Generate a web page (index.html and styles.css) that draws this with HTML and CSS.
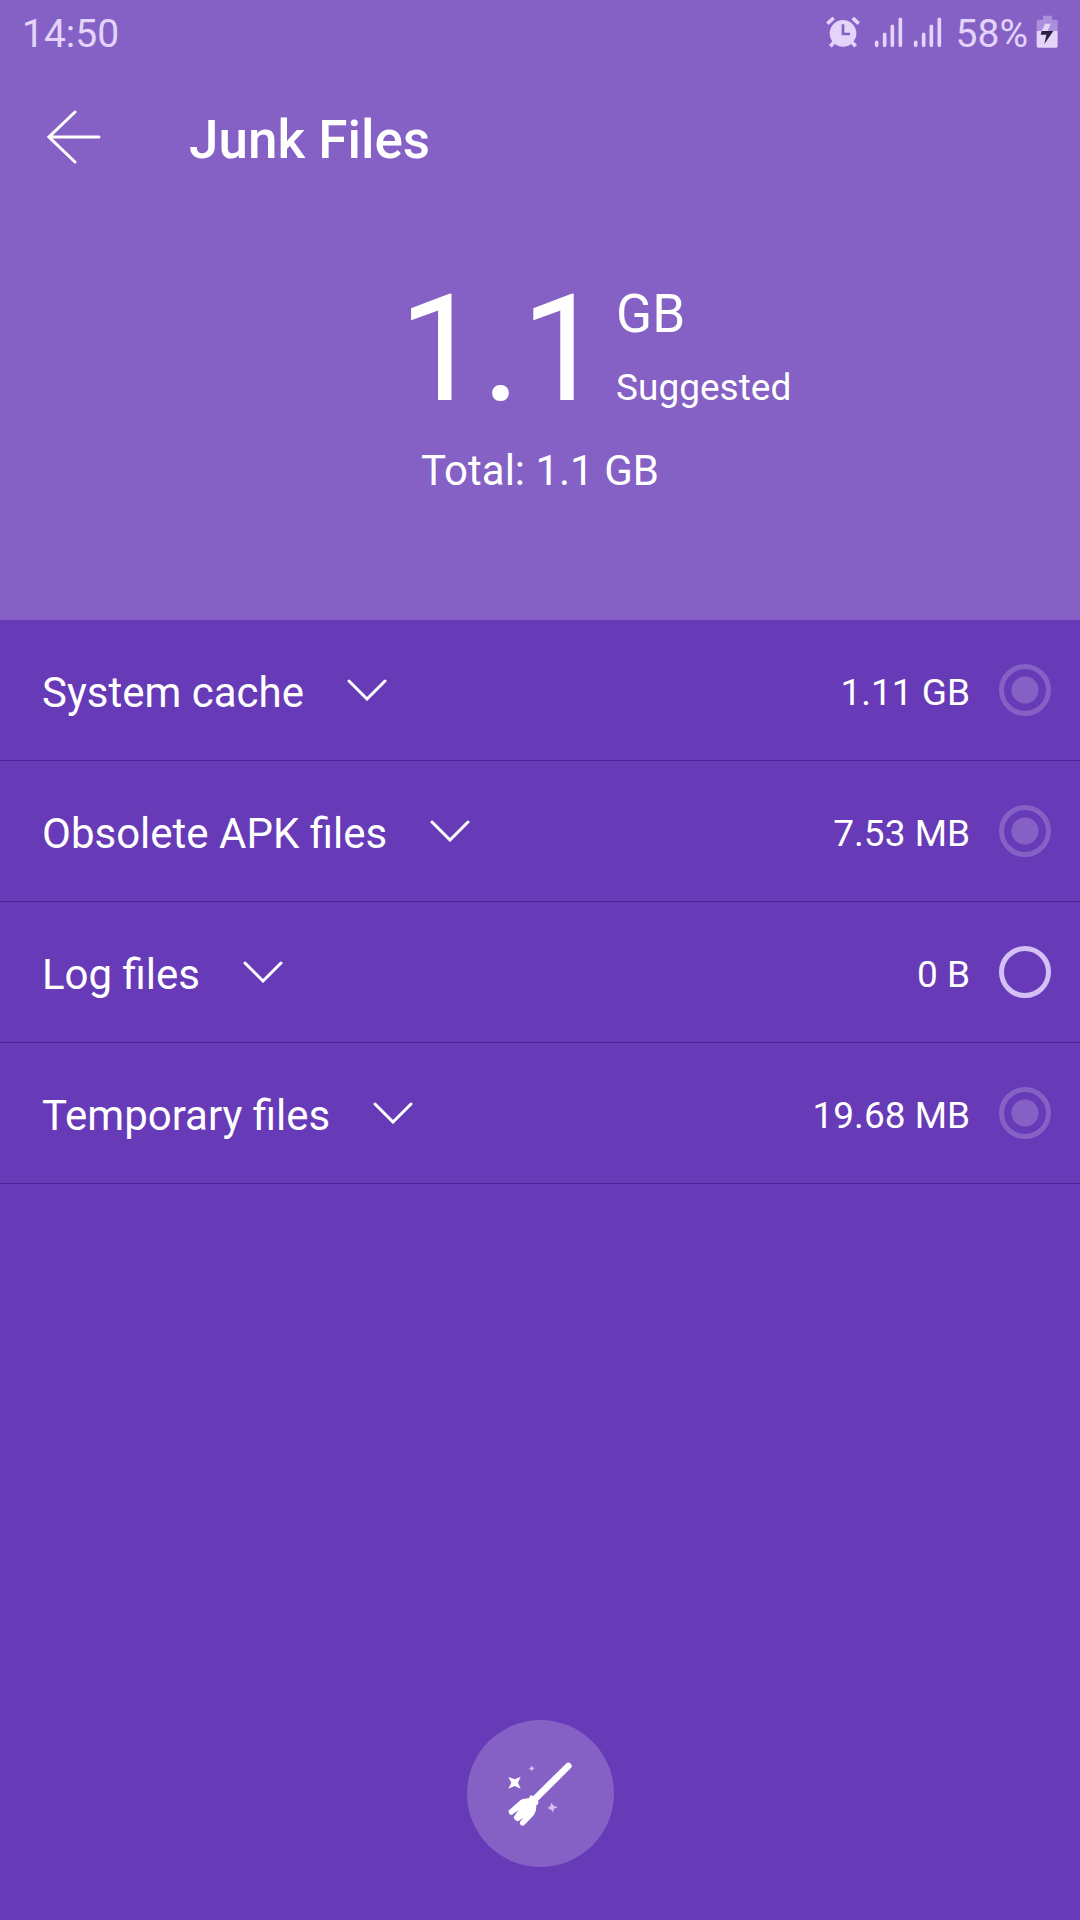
FILE: index.html
```html
<!DOCTYPE html>
<html lang="en">
    <head>
        <meta charset="utf-8">
        <meta name="viewport" content="width=device-width, initial-scale=1">
        <title>Junk Files</title>
        <link rel="stylesheet" href="styles.css">
    </head>
    <body>
        <header class="top">
            <div class="status-bar">
                <span>14:50</span>
                <div class="status-icons">
                    <svg class="alarm" viewBox="81 45 102 96" aria-hidden="true">
                        <g fill="none" stroke="currentColor" stroke-width="11">
                            <path d="M85 68L104 51M161 51L179 68"/>
                            <path d="M105 123L94 136M158 123L170 136"/>
                        </g>
                        <circle cx="132" cy="97" r="40" fill="currentColor"/>
                        <path class="alarm-hands" d="M132 70V99H153"/>
                    </svg>
                    <svg class="signal" viewBox="225 45 87 96" aria-hidden="true">
                        <path d="M233 124V133M257 100V133M280 76V133M304 55V133"/>
                    </svg>
                    <svg class="signal" viewBox="225 45 87 96" aria-hidden="true">
                        <path d="M233 124V133M257 100V133M280 76V133M304 55V133"/>
                    </svg>
                    <span class="percent">58%</span>
                    <svg class="battery" viewBox="709 45 66 99" aria-hidden="true">
                        <path d="M730 47H757V59H769Q774 59 774 64V93H711V64Q711 59 716 59H730Z" fill="currentColor" opacity=".4"/>
                        <path d="M711 93H774V138Q774 143 769 143H716Q711 143 711 138Z" fill="currentColor"/>
                        <path d="M736 71H753L744 93H726Z" fill="currentColor"/>
                        <path d="M726 93H761L734 132L740 104H723Z" fill="#2c2140"/>
                    </svg>
                </div>
            </div>

            <div class="title-bar">
                <button type="button" class="back" aria-label="Back">
                    <svg viewBox="0 0 54 54" aria-hidden="true">
                        <path d="M28 2L2 27L28 52M2 27H52"/>
                    </svg>
                </button>
                <h1>Junk Files</h1>
            </div>

            <div class="summary">
                <span class="amount">1.1</span>
                <div class="amount-info">
                    <span class="unit">GB</span>
                    <span class="suggested">Suggested</span>
                </div>
            </div>
            <p class="total">Total: 1.1 GB</p>
        </header>

        <main>
            <ul class="files">
                <li>
                    <button type="button" class="expand">
                        <span id="system">System cache</span>
                        <svg viewBox="0 0 40 22" aria-hidden="true"><path d="M2 2L20 20L38 2"/></svg>
                    </button>
                    <span class="size">1.11 GB</span>
                    <input type="checkbox" aria-labelledby="system" checked>
                </li>
                <li>
                    <button type="button" class="expand">
                        <span id="apk">Obsolete APK files</span>
                        <svg viewBox="0 0 40 22" aria-hidden="true"><path d="M2 2L20 20L38 2"/></svg>
                    </button>
                    <span class="size">7.53 MB</span>
                    <input type="checkbox" aria-labelledby="apk" checked>
                </li>
                <li>
                    <button type="button" class="expand">
                        <span id="log">Log files</span>
                        <svg viewBox="0 0 40 22" aria-hidden="true"><path d="M2 2L20 20L38 2"/></svg>
                    </button>
                    <span class="size">0 B</span>
                    <input type="checkbox" aria-labelledby="log">
                </li>
                <li>
                    <button type="button" class="expand">
                        <span id="temp">Temporary files</span>
                        <svg viewBox="0 0 40 22" aria-hidden="true"><path d="M2 2L20 20L38 2"/></svg>
                    </button>
                    <span class="size">19.68 MB</span>
                    <input type="checkbox" aria-labelledby="temp" checked>
                </li>
            </ul>
        </main>

        <footer>
            <button type="button" class="clean" aria-label="Clean">
                <svg viewBox="202 181 198 198" aria-hidden="true">
                    <path d="M386 196L288 293" fill="none" stroke="#fff" stroke-width="20" stroke-linecap="round"/>
                    <path fill="#fff" d="M271 285Q276 282 280 287L294 299Q299 305 295 311L290 314Q291 334 280 346L254 373Q248 378 243 373Q238 368 242 362L251 352L236 361Q232 363 228 359L224 355Q220 350 224 346L236 329L217 342Q213 344 209 339Q205 333 208 329L237 303Q248 293 268 293Z"/>
                    <path fill="#fff" d="M206 229L225 236L243 228L235 246L243 264L225 256L206 264L215 246Z"/>
                    <path fill="#d6c0f0" d="M274 195L279 200L285 202L280 206L278 212L274 207L267 205L273 201Z"/>
                    <path fill="#d6c0f0" d="M335 306L342 315L354 320L343 324L340 335L334 327L323 322L332 317Z"/>
                </svg>
            </button>
        </footer>
    </body>
</html>
```
FILE: styles.css
```css
* {
    box-sizing: border-box;
}

body {
    display: flex;
    flex-direction: column;
    min-height: 100vh;
    margin: 0;
    background: #673ab7;
    color: white;
    font-family: Roboto, "Liberation Sans", sans-serif;
}

button {
    padding: 0;
    border: 0;
    background: none;
    color: inherit;
    font: inherit;
    cursor: pointer;
}

svg {
    display: block;
}

.top {
    padding-bottom: 124px;
    background: #8561c5;
}

/* Status bar */

.status-bar {
    display: flex;
    justify-content: space-between;
    align-items: center;
    padding: 12px 22px 0;
    color: #e4d4fa;
    font-size: 39px;
    line-height: 44px;
}

.status-icons {
    display: flex;
    align-items: center;
}

.status-icons svg {
    margin-bottom: 5px;
}

.alarm {
    width: 34px;
    height: 32px;
    margin-right: 14px;
}

.alarm-hands {
    fill: none;
    stroke: #8561c5;
    stroke-width: 8;
}

.signal {
    width: 29px;
    height: 32px;
    margin-right: 10px;
    fill: none;
    stroke: currentColor;
    stroke-width: 11;
    stroke-linecap: round;
}

.percent {
    margin: 0 8px 0 4px;
}

.battery {
    width: 22px;
    height: 33px;
}

/* Title */

.title-bar {
    display: flex;
    align-items: center;
    gap: 88px;
    padding: 48px 47px 0;
}

.back svg {
    width: 54px;
    height: 54px;
    fill: none;
    stroke: white;
    stroke-width: 3;
    stroke-linecap: round;
}

h1 {
    margin: 0;
    padding-top: 6px;
    font-size: 53px;
    font-weight: 500;
    line-height: 60px;
}

/* Amount of junk */

.summary {
    display: flex;
    justify-content: center;
    gap: 12px;
    padding: 100px 0 0 110px;
}

.amount {
    font-size: 148px;
    line-height: 160px;
}

.amount-info {
    display: flex;
    flex-direction: column;
    justify-content: space-between;
    padding: 14px 0 20px;
}

.unit {
    font-size: 53px;
    line-height: 60px;
}

.suggested {
    font-size: 37px;
    line-height: 44px;
}

.total {
    margin: 16px 0 0;
    font-size: 42px;
    line-height: 50px;
    text-align: center;
}

/* File groups */

.files {
    margin: 0;
    padding: 0;
    list-style: none;
}

.files li {
    display: flex;
    align-items: center;
    padding: 44px 29px 44px 42px;
    border-bottom: 1px solid #4c2392;
}

.expand {
    display: flex;
    align-items: center;
    gap: 43px;
    margin-right: auto;
    font-size: 42px;
    line-height: 46px;
}

.expand span, .size {
    padding-top: 6px;
}

.expand svg {
    width: 40px;
    height: 22px;
    fill: none;
    stroke: white;
    stroke-width: 3;
    stroke-linecap: round;
}

.size {
    margin-right: 29px;
    font-size: 37px;
    line-height: 44px;
}

.files input {
    width: 52px;
    height: 52px;
    margin: 0;
    border: 5px solid #d4bff7;
    border-radius: 50%;
    appearance: none;
}

.files input:checked {
    border-color: #8561c5;
    background: radial-gradient(circle, #8561c5 13px, transparent 14px);
}

/* Clean button */

footer {
    display: flex;
    justify-content: center;
    margin-top: auto;
    padding: 53px 0;
}

.clean {
    display: grid;
    place-items: center;
    width: 147px;
    height: 147px;
    border-radius: 50%;
    background: #8561c5;
}

.clean svg {
    width: 66px;
    height: 66px;
}
```
